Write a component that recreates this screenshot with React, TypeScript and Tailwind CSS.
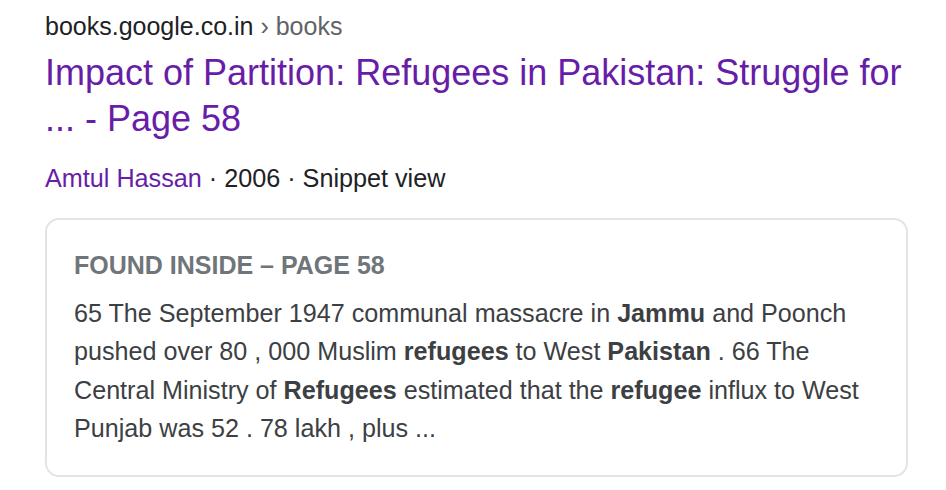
import React from "react";

export default function App() {
  return (
    <div
      className="w-[946px] h-[490px] bg-white overflow-hidden pl-[45px]"
      style={{ fontFamily: '"Liberation Sans", Arial, sans-serif' }}
    >
      <div className="pt-[10px] text-[25px] leading-[32px] text-[#202124]">
        books.google.co.in<span className="text-[#5f6368]"> › books</span>
      </div>
      <div className="mt-[8px] text-[36px] leading-[46px] text-[#681da8] w-[880px]">
        Impact of Partition: Refugees in Pakistan: Struggle for ... - Page 58
      </div>
      <div className="mt-[20px] text-[25.2px] leading-[32px] text-[#202124]">
        <span className="text-[#681da8]">Amtul Hassan</span> · 2006 · Snippet view
      </div>
      <div className="mt-[24px] w-[863px] h-[259px] border-2 border-[#e3e4e7] rounded-[14px] px-[27px] pt-[29px]">
        <div className="text-[25px] leading-[32px] font-bold text-[#70757a]">
          FOUND INSIDE – PAGE 58
        </div>
        <div className="mt-[13px] text-[25.15px] leading-[38.3px] text-[#3c4043]">
          65 The September 1947 communal massacre in <b>Jammu</b> and Poonch pushed over 80 , 000
          Muslim <b>refugees</b> to West <b>Pakistan</b> . 66 The Central Ministry of{" "}
          <b>Refugees</b> estimated that the <b>refugee</b> influx to West Punjab was 52 . 78 lakh
          , plus ...
        </div>
      </div>
    </div>
  );
}
